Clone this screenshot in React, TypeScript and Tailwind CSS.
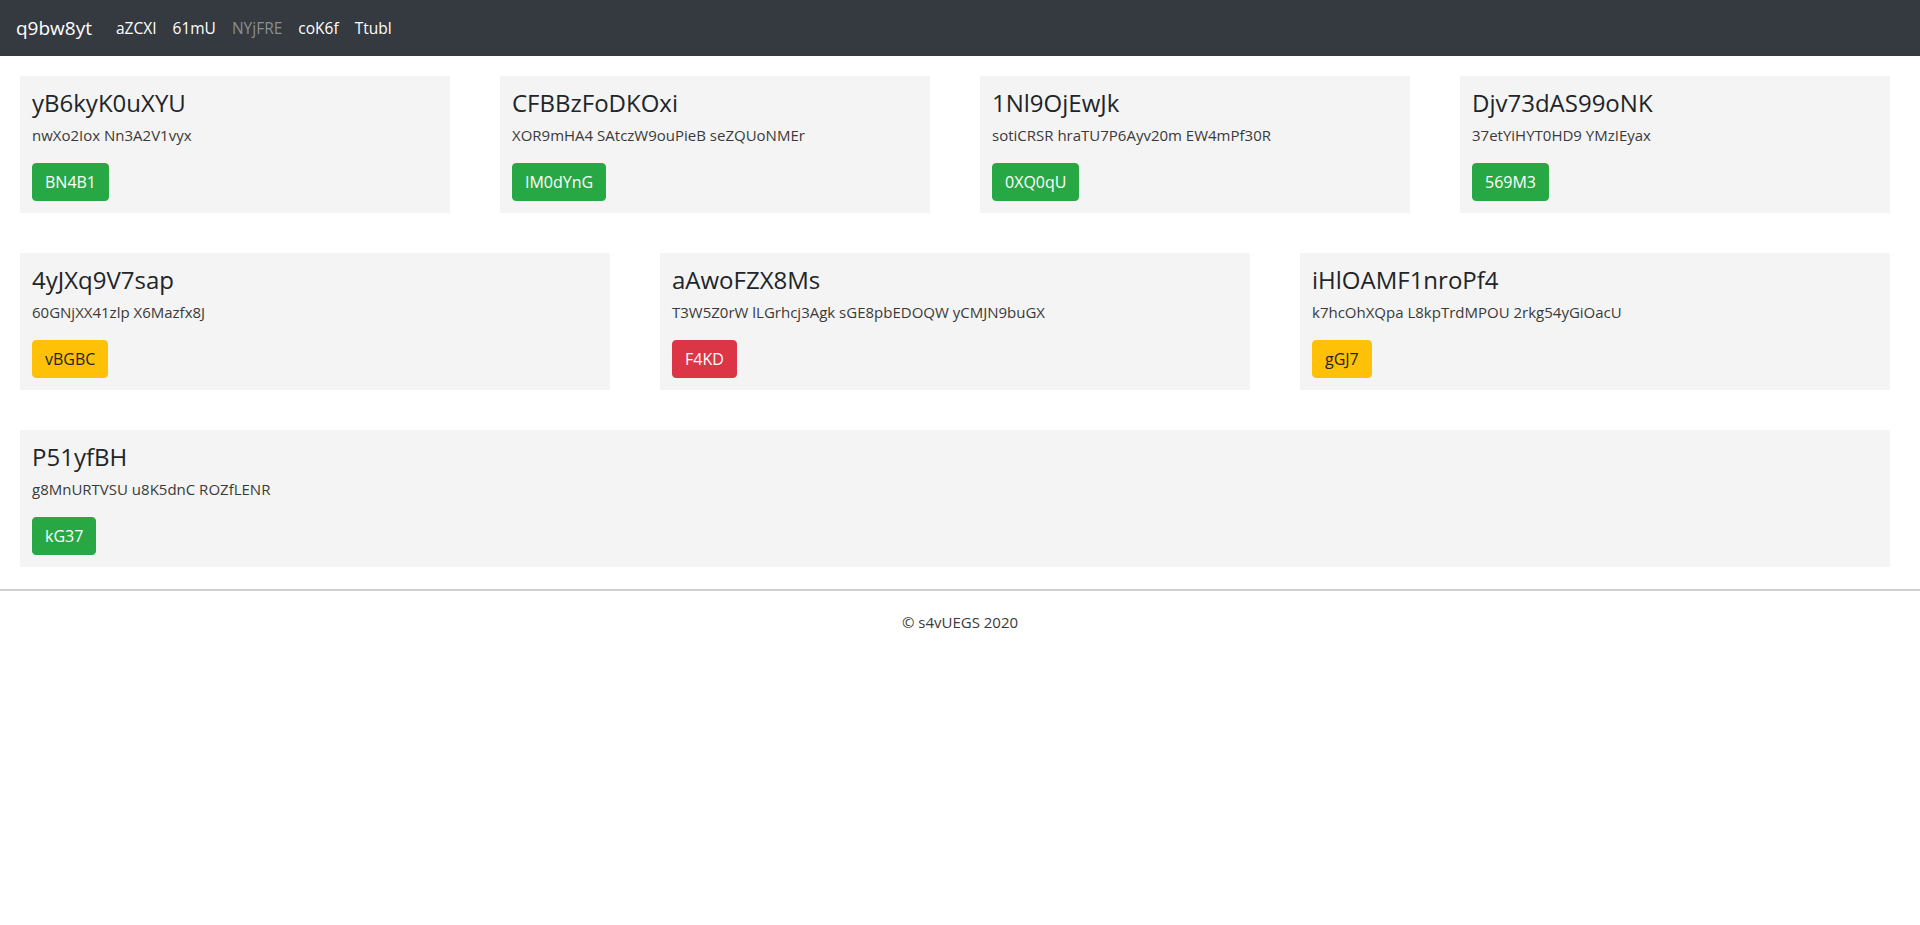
import React from "react";

type Tone = "green" | "yellow" | "red";

interface CardData {
  title: string;
  text: string;
  button: string;
  tone: Tone;
}

const toneClass: Record<Tone, string> = {
  green: "bg-[#28a745] border-[#28a745] text-white",
  yellow: "bg-[#ffc107] border-[#ffc107] text-[#212529]",
  red: "bg-[#dc3545] border-[#dc3545] text-white",
};

const rowOne: CardData[] = [
  { title: "yB6kyK0uXYU", text: "nwXo2Iox Nn3A2V1vyx", button: "BN4B1", tone: "green" },
  { title: "CFBBzFoDKOxi", text: "XOR9mHA4 SAtczW9ouPieB seZQUoNMEr", button: "IM0dYnG", tone: "green" },
  { title: "1Nl9OjEwJk", text: "sotiCRSR hraTU7P6Ayv20m EW4mPf30R", button: "0XQ0qU", tone: "green" },
  { title: "Djv73dAS99oNK", text: "37etYiHYT0HD9 YMzIEyax", button: "569M3", tone: "green" },
];

const rowTwo: CardData[] = [
  { title: "4yJXq9V7sap", text: "60GNjXX41zlp X6Mazfx8J", button: "vBGBC", tone: "yellow" },
  { title: "aAwoFZX8Ms", text: "T3W5Z0rW lLGrhcj3Agk sGE8pbEDOQW yCMJN9buGX", button: "F4KD", tone: "red" },
  { title: "iHlOAMF1nroPf4", text: "k7hcOhXQpa L8kpTrdMPOU 2rkg54yGiOacU", button: "gGJ7", tone: "yellow" },
];

const rowThree: CardData[] = [
  { title: "P51yfBH", text: "g8MnURTVSU u8K5dnC ROZfLENR", button: "kG37", tone: "green" },
];

const navLinks = [
  { label: "aZCXI", muted: false },
  { label: "61mU", muted: false },
  { label: "NYjFRE", muted: true },
  { label: "coK6f", muted: false },
  { label: "Ttubl", muted: false },
];

function Card({ card }: { card: CardData }) {
  return (
    <div className="bg-[#f4f4f4] h-[137px] px-3 pt-3 pb-[11px] flex flex-col items-start">
      <h4 className="text-[24px] leading-[29px] font-medium text-[#212529] mb-[7px]">{card.title}</h4>
      <p className="text-[15px] leading-[22px] text-[#3a3a3a] mb-[17px]">{card.text}</p>
      <button
        className={`h-[38px] px-3 rounded border text-[16px] leading-6 ${toneClass[card.tone]}`}
      >
        {card.button}
      </button>
    </div>
  );
}

function CardRow({ cards, cols }: { cards: CardData[]; cols: string }) {
  return (
    <div className={`grid ${cols}`}>
      {cards.map((c) => (
        <div key={c.title} className="pl-5 pr-[30px]">
          <Card card={c} />
        </div>
      ))}
    </div>
  );
}

export default function App() {
  return (
    <div className="min-h-screen bg-white font-['Open_Sans',sans-serif] text-[#212529]">
      <nav className="h-14 bg-[#343a40] flex items-center px-4">
        <span className="text-[19px] leading-[30px] text-white mr-4">q9bw8yt</span>
        <ul className="flex items-center">
          {navLinks.map((l) => (
            <li key={l.label}>
              <a
                href="#"
                className={`block px-2 py-2 text-[15.5px] leading-6 font-medium ${
                  l.muted ? "text-[#8b8e92]" : "text-white"
                }`}
              >
                {l.label}
              </a>
            </li>
          ))}
        </ul>
      </nav>

      <main className="pt-5 pb-[22px] flex flex-col gap-10">
        <CardRow cards={rowOne} cols="grid-cols-4" />
        <CardRow cards={rowTwo} cols="grid-cols-3" />
        <CardRow cards={rowThree} cols="grid-cols-1" />
      </main>

      <footer className="border-t-2 border-[#d0d0d0] pt-[20px] text-center">
        <p className="text-[15px] leading-[22px] text-[#3a3a3a]">© s4vUEGS 2020</p>
      </footer>
    </div>
  );
}
